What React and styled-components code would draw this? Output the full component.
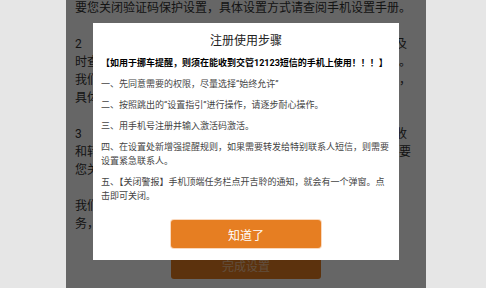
import React from "react";
import styled, { createGlobalStyle } from "styled-components";

const Global = createGlobalStyle`
  html, body { margin: 0; padding: 0; }
  body {
    background: #e6e6e6;
    font-family: Roboto, "Noto Sans CJK SC", sans-serif;
    overflow: hidden;
  }
`;

const Phone = styled.div`
  position: relative;
  width: 360px;
  height: 288px;
  margin-left: 66px;
  background: #fff;
  overflow: hidden;
`;

const Content = styled.div`
  margin-top: -1px;
  padding: 0 9px;
  font-size: 12px;
  line-height: 18px;
  color: #333;
`;

const Para = styled.p`
  margin: 0 0 18px;
`;

const StepNum = styled.span`
  display: inline-block;
  width: 20px;
`;

const Footer = styled.div`
  display: flex;
  justify-content: center;
  margin-top: 9px;
`;

const Button = styled.button`
  width: 150px;
  height: 28px;
  border: none;
  border-radius: 3px;
  background: #e67e22;
  color: ${(p) => (p.$muted ? "rgba(255,255,255,0.55)" : "#fff")};
  font-family: Roboto, "Noto Sans CJK SC", sans-serif;
  font-size: 12px;
  box-shadow: ${(p) => (p.$muted ? "none" : "0 0 0 1px rgba(245,170,110,0.45)")};
  padding: 0;
  cursor: pointer;
`;

const Overlay = styled.div`
  position: absolute;
  inset: 0;
  background: rgba(0, 0, 0, 0.6);
  display: flex;
  justify-content: center;
  align-items: flex-start;
  padding-top: 23px;
`;

const Modal = styled.div`
  width: 306px;
  box-sizing: border-box;
  background: #fff;
  padding: 9px 8px 12px;
  display: flex;
  flex-direction: column;
`;

const Title = styled.div`
  text-align: center;
  font-size: 12px;
  line-height: 18px;
  color: #222;
  margin-bottom: 6px;
`;

const Item = styled.p`
  margin: 0 0 7px;
  font-size: 9px;
  line-height: 14px;
  color: ${(p) => (p.$strong ? "#000" : "#444")};
  font-weight: ${(p) => (p.$strong ? 700 : 400)};
`;

const ModalFooter = styled.div`
  display: flex;
  justify-content: center;
  margin-top: 10px;
`;

export default function App() {
  return (
    <>
      <Global />
      <Phone>
        <Content>
          <Para>要您关闭验证码保护设置，具体设置方式请查阅手机设置手册。</Para>
          <Para>
            <StepNum>2</StepNum>若需要使用挪车提醒功能，请确保手机能正常接收短信以及时查看通知，部分手机会拦截验证码短信，请在设置里面关闭。我们建议您将本应用加入白名单，并允许在通知栏中显示消息，具体方法请参考手机设置说明。
          </Para>
          <Para>
            <StepNum>3</StepNum>部分手机自动屏蔽陌生号码短信，导致本应用无法及时接收和转发提醒短信，如遇到此类情况，请前往短信设置页面，需要您关闭短信拦截功能，以免错过提醒。
          </Para>
          <Para>
            我们会严格保护您的隐私，所有短信内容仅用于提醒您挪车服务，感谢您的支持与配合。
          </Para>
        </Content>
        <Footer>
          <Button $muted>完成设置</Button>
        </Footer>
        <Overlay>
          <Modal>
            <Title>注册使用步骤</Title>
            <Item $strong>【如用于挪车提醒，则须在能收到交管12123短信的手机上使用！！！】</Item>
            <Item>一、先同意需要的权限，尽量选择“始终允许”</Item>
            <Item>二、按照跳出的“设置指引”进行操作，请逐步耐心操作。</Item>
            <Item>三、用手机号注册并输入激活码激活。</Item>
            <Item>四、在设置处新增强提醒规则，如果需要转发给特别联系人短信，则需要设置紧急联系人。</Item>
            <Item>五、【关闭警报】手机顶端任务栏点开吉聆的通知，就会有一个弹窗。点击即可关闭。</Item>
            <ModalFooter>
              <Button>知道了</Button>
            </ModalFooter>
          </Modal>
        </Overlay>
      </Phone>
    </>
  );
}
